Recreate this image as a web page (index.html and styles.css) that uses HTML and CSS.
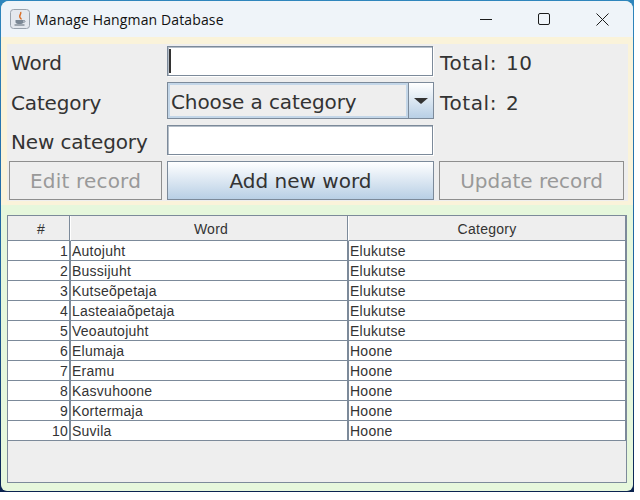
FILE: index.html
```html
<!DOCTYPE html>
<html lang="en">
 <head>
  <meta charset="utf-8"/>
  <title>Manage Hangman Database</title>
  <link rel="stylesheet" href="styles.css">
 </head>
 <body>
	<div class="desktop">
		<div class="window">
			<div class="titlebar">
				<svg class="app-icon" width="20" height="20" viewBox="0 0 20 20">
					<rect x="0.5" y="0.5" width="19" height="19" rx="3" fill="#e4e8ee" stroke="#9aa3ad"/>
					<path d="M10.5 3 C12 5 8.5 6 10 8.5 C10.5 9.5 11.5 9.5 11 10.5" fill="none" stroke="#d9702a" stroke-width="1.5"/>
					<path d="M5.5 11 H13.5 V13 C13.5 14.5 12 15 9.5 15 C7 15 5.5 14.5 5.5 13 Z" fill="#7b8794"/>
					<path d="M13.5 11.5 C15.5 11 15.5 13.5 13.5 13.5" fill="none" stroke="#7b8794"/>
					<path d="M4.5 16 H14.5" stroke="#5d6975" stroke-width="1.2"/>
				</svg>
				<span class="title-text">Manage Hangman Database</span>
				<div class="controls">
					<svg width="46" height="20" viewBox="0 0 46 20"><path d="M17 10.5 H29" stroke="#1b1b1b"/></svg>
					<svg width="46" height="20" viewBox="0 0 46 20"><rect x="17.5" y="4.5" width="11" height="11" rx="1.5" fill="none" stroke="#1b1b1b"/></svg>
					<svg width="46" height="20" viewBox="0 0 46 20"><path d="M17.5 4.5 L29.5 16.5 M29.5 4.5 L17.5 16.5" stroke="#1b1b1b"/></svg>
				</div>
			</div>
			<div class="client">
				<div class="top-band">
					<div class="form-panel">
						<div class="form-grid">
							<label class="lbl">Word</label>
							<div class="field"><span class="caret"></span></div>
							<span class="lbl total">Total: 10</span>

							<label class="lbl">Category</label>
							<div class="combo">
								<div class="combo-value">Choose a category</div>
								<div class="combo-arrow"><span class="tri"></span></div>
							</div>
							<span class="lbl total">Total: 2</span>

							<label class="lbl">New category</label>
							<div class="field"></div>
							<span></span>
						</div>
						<div class="btn-row">
							<div class="btn btn-off btn-edit">Edit record</div>
							<div class="btn btn-main">Add new word</div>
							<div class="btn btn-off btn-update">Update record</div>
						</div>
					</div>
				</div>
				<div class="table-wrap">
					<table class="grid">
						<thead>
							<tr><th class="c-num">#</th><th class="c-word">Word</th><th>Category</th></tr>
						</thead>
						<tbody>
							<tr><td class="num">1</td><td>Autojuht</td><td>Elukutse</td></tr>
							<tr><td class="num">2</td><td>Bussijuht</td><td>Elukutse</td></tr>
							<tr><td class="num">3</td><td>Kutseõpetaja</td><td>Elukutse</td></tr>
							<tr><td class="num">4</td><td>Lasteaiaõpetaja</td><td>Elukutse</td></tr>
							<tr><td class="num">5</td><td>Veoautojuht</td><td>Elukutse</td></tr>
							<tr><td class="num">6</td><td>Elumaja</td><td>Hoone</td></tr>
							<tr><td class="num">7</td><td>Eramu</td><td>Hoone</td></tr>
							<tr><td class="num">8</td><td>Kasvuhoone</td><td>Hoone</td></tr>
							<tr><td class="num">9</td><td>Kortermaja</td><td>Hoone</td></tr>
							<tr><td class="num">10</td><td>Suvila</td><td>Hoone</td></tr>
						</tbody>
					</table>
				</div>
			</div>
		</div>
	</div>
 </body>
</html>
```

FILE: styles.css
```css
*{margin:0; padding:0; box-sizing:border-box;}
html,body{background:#fff; overflow:hidden;}

.desktop{width:634px; height:492px; background:linear-gradient(#2f86bd 0, #1c5f9c 60%, #0b2350 100%); padding:1px;}
.window{height:100%; border-radius:8px 8px 6px 6px; overflow:hidden; background:#e6f7dc; display:flex; flex-direction:column;}

/* title */
.titlebar{height:36px; background:#eff4f9; display:flex; align-items:center; padding-left:9px; flex:none;}
.app-icon{flex:none;}
.title-text{font:14px "Open Sans","Noto Sans",sans-serif; letter-spacing:.13px; color:#111; margin-left:6px;}
.controls{margin-left:auto; display:flex; padding-right:8px;}
.controls svg{margin-left:12px; display:block;}

/* form */
.client{flex:1; display:flex; flex-direction:column;}
.top-band{background:#faf3da; padding:7px 5px 4px 6px; flex:none;}
.form-panel{background:#eee; height:157px; padding:2px 3px 0 2px;}
.form-grid{display:grid; grid-template-columns:158px 267px 1fr; grid-template-rows:30px 37px 30px; row-gap:6px; align-items:center;}
.lbl{font:20px/30px "DejaVu Sans",sans-serif; letter-spacing:-.15px; color:#333; padding:4px 0 0 2px; white-space:nowrap;}
.form-grid > span.lbl{padding-left:6px;}
.form-grid > .total{letter-spacing:.6px; word-spacing:2px;}
.field{height:30px; background:#fff; border:1px solid #7c8a9a; box-shadow:1px 1px 0 #fff, inset 1px 1px 0 #b5bec8; width:266px; padding:2px 1px;}
.caret{display:block; width:2px; height:24px; background:#333;}
.combo{height:37px; display:flex; border:1px solid #7c8a9a;}
.combo-value{flex:1; border:2px solid #c3d6e8; font:20px "DejaVu Sans",sans-serif; letter-spacing:-.1px; color:#333; line-height:35px; padding-left:1px;}
.combo-arrow{width:25px; border-left:1px solid #7c8a9a; background:linear-gradient(#fff, #b8cfe5); display:flex; align-items:center; justify-content:center;}
.tri{width:0; height:0; border-left:7px solid transparent; border-right:7px solid transparent; border-top:6px solid #333;}

.btn-row{display:flex; margin-top:6px;}
.btn{height:39px; border:1px solid #7c8a9a; font:20px/39px "DejaVu Sans",sans-serif; text-align:center;}
.btn-off{color:#999; border-color:#8e8e8e;}
.btn-edit{width:153px; letter-spacing:.2px;}
.btn-main{width:267px; margin:0 5px; color:#333; background:linear-gradient(#fff, #b8cfe5);}
.btn-update{width:185px;}

/* table */
.table-wrap{flex:1; margin:10px 6px 8px 6px; background:#eee; border:1px solid #7c8a9a;}
.grid{width:100%; border-collapse:separate; border-spacing:0; table-layout:fixed; font:14px "Liberation Sans",sans-serif; letter-spacing:.25px; color:#333;}
.grid th{height:25px; padding-top:2px; font-weight:normal; background:#eee; border-right:1px solid #7c8a9a; border-bottom:1px solid #7c8a9a;}
.grid th + th{border-left:1px solid #fff;}
.grid th.c-num{padding-left:5px;}
.grid th.c-word{padding-left:4px;}
.grid td{height:20px; background:#fff; padding:0 1px; border-right:1px solid #7c8a9a; border-bottom:1px solid #7c8a9a; white-space:nowrap;}
.grid td + td{border-left:1px solid #7c8a9a;}
.c-num{width:62px;}
.c-word{width:278px;}
.grid td.num{text-align:right; padding-right:1px;}
```
